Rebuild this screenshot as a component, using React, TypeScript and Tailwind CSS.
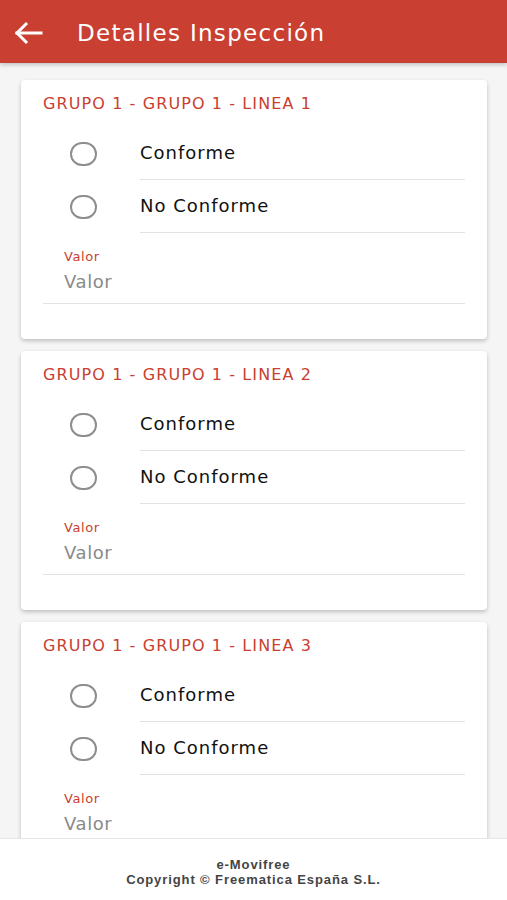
import React from "react";

const lines = [1, 2, 3];

const Radio = () => (
  <span className="block w-[27px] h-[24px] rounded-full border-2 border-[#8e8e8e] shrink-0" />
);

const InspectionCard = ({ n }: { n: number }) => (
  <div className="bg-white rounded-[4px] shadow-[0_2px_4px_rgba(0,0,0,0.22)] pt-[14px] pb-[35px] shrink-0">
    <div className="pl-[22px] text-[16px] leading-[20px] tracking-[1.1px] text-[#c9402f]">
      GRUPO 1 - GRUPO 1 - LINEA {n}
    </div>
    <div className="mt-[13px]">
      {["Conforme", "No Conforme"].map((label) => (
        <div key={label} className="flex items-center h-[53px]">
          <div className="w-[119px] pl-[49px] flex items-center">
            <Radio />
          </div>
          <div className="flex-1 mr-[22px] h-full flex items-center border-b border-[#e2e2e2] text-[18px] tracking-[1px] text-[#111] pb-[1px]">
            {label}
          </div>
        </div>
      ))}
    </div>
    <div className="mx-[22px] mt-[16px] pl-[21px] pb-[9px] border-b border-[#e2e2e2]">
      <div className="text-[13px] leading-[16px] tracking-[0.6px] text-[#c9402f]">Valor</div>
      <div className="mt-[5px] text-[18px] leading-[24px] tracking-[0.6px] text-[#8a8a8a]">Valor</div>
    </div>
  </div>
);

export default function App() {
  return (
    <div
      className="h-screen flex flex-col bg-[#f2f2f2] overflow-hidden"
      style={{ fontFamily: '"DejaVu Sans", "Liberation Sans", sans-serif' }}
    >
      <header className="h-[63px] shrink-0 bg-[#c94032] flex items-center shadow-[0_2px_4px_rgba(0,0,0,0.2)] z-10">
        <svg width="30" height="24" viewBox="0 0 30 24" className="ml-[13px] mt-[2px]" fill="none" stroke="white" strokeWidth="3" strokeLinecap="square">
          <path d="M28 12H4" />
          <path d="M13 3L4 12l9 9" />
        </svg>
        <h1 className="ml-[34px] mt-[3px] text-white text-[23px] tracking-[1.3px]">Detalles Inspección</h1>
      </header>
      <main className="flex-1 overflow-hidden bg-[#f5f5f5] px-[20px] pl-[21px] pt-[17px] flex flex-col gap-[12px]">
        {lines.map((n) => (
          <InspectionCard key={n} n={n} />
        ))}
      </main>
      <footer
        className="h-[62px] shrink-0 bg-white border-t border-[#e6e6e6] flex flex-col items-center justify-center text-[13px] leading-[15px] tracking-[0.9px] text-[#444] font-bold pt-[5px]"
        style={{ fontFamily: '"Liberation Sans", Arial, sans-serif' }}
      >
        <div>e-Movifree</div>
        <div>Copyright © Freematica España S.L.</div>
      </footer>
    </div>
  );
}
